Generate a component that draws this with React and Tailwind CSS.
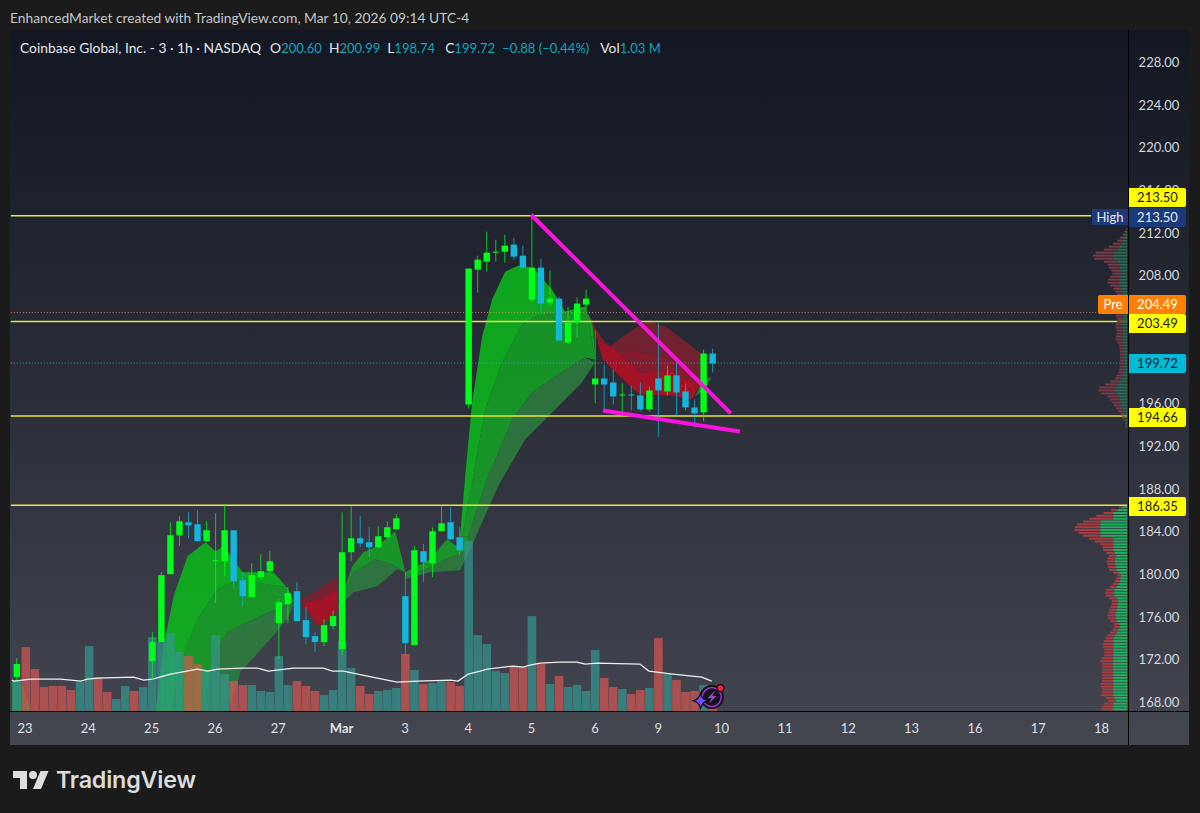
const xAt = (i) => 16 + 9.05 * i;

// [index, bodyTop, bodyBottom, wickTop, wickBottom, up]
const candles = [
  [0, 665, 678, 659, 681, 1],
  [15, 643, 662, 633, 681, 1],
  [16, 576, 643, 573, 643, 1],
  [17, 536, 575, 523, 575, 1],
  [18, 522, 536, 517, 547, 1],
  [19, 523, 526, 513, 539, 0],
  [20, 525, 542, 511, 542, 0],
  [21, 531, 542, 522, 543, 1],
  [22, 561, 562, 514, 604, 1],
  [23, 531, 562, 505, 577, 1],
  [24, 531, 582, 531, 590, 0],
  [25, 581, 597, 573, 607, 0],
  [26, 576, 598, 564, 598, 1],
  [27, 572, 578, 555, 580, 1],
  [28, 562, 572, 552, 573, 1],
  [29, 603, 624, 600, 660, 1],
  [30, 594, 605, 588, 624, 1],
  [31, 592, 622, 583, 622, 0],
  [32, 621, 638, 608, 645, 0],
  [33, 637, 643, 633, 653, 0],
  [34, 626, 643, 620, 647, 1],
  [35, 617, 627, 612, 630, 1],
  [36, 553, 650, 513, 656, 1],
  [37, 539, 553, 507, 562, 1],
  [38, 539, 544, 517, 548, 0],
  [39, 543, 548, 528, 558, 0],
  [40, 537, 548, 527, 549, 1],
  [41, 528, 538, 522, 539, 1],
  [42, 519, 530, 515, 531, 1],
  [43, 597, 644, 573, 657, 0],
  [44, 551, 646, 547, 646, 1],
  [45, 552, 563, 545, 583, 0],
  [46, 532, 564, 528, 578, 1],
  [47, 524, 532, 507, 532, 1],
  [48, 523, 540, 508, 541, 0],
  [49, 538, 551, 528, 556, 0],
  [50, 269, 405, 269, 409, 1],
  [51, 260, 270, 256, 293, 1],
  [52, 253, 262, 232, 272, 1],
  [53, 252, 253, 240, 262, 1],
  [54, 246, 252, 235, 263, 1],
  [55, 245, 257, 238, 260, 0],
  [56, 256, 268, 246, 268, 0],
  [57, 268, 300, 215, 302, 1],
  [58, 268, 304, 259, 313, 0],
  [59, 299, 303, 271, 307, 1],
  [60, 299, 341, 297, 341, 0],
  [61, 323, 343, 307, 344, 1],
  [62, 304, 323, 298, 338, 1],
  [63, 299, 305, 290, 310, 1],
  [64, 379, 385, 331, 404, 1],
  [65, 379, 385, 365, 410, 0],
  [66, 383, 397, 370, 405, 0],
  [67, 395, 396, 384, 417, 1],
  [68, 395, 396, 386, 411, 0],
  [69, 396, 410, 383, 412, 0],
  [70, 391, 410, 387, 412, 1],
  [71, 379, 391, 323, 438, 0],
  [72, 376, 392, 366, 396, 1],
  [73, 376, 393, 362, 416, 0],
  [74, 392, 408, 384, 411, 0],
  [75, 408, 414, 400, 428, 0],
  [76, 354, 413, 350, 422, 1],
  [77, 354, 364, 349, 373, 0],
];

// top of each volume bar, t = teal, r = red
const volumes = [
  [681, "t"], [648, "r"], [670, "r"], [688, "r"], [687, "r"], [687, "r"], [691, "r"], [683, "t"], [647, "t"], [678, "r"],
  [693, "r"], [700, "t"], [687, "t"], [692, "r"], [688, "t"], [638, "t"], [643, "t"], [634, "t"], [653, "t"], [657, "r"],
  [665, "r"], [672, "t"], [636, "t"], [675, "t"], [682, "r"], [686, "r"], [686, "t"], [692, "t"], [693, "t"], [657, "t"],
  [686, "t"], [682, "r"], [687, "r"], [692, "r"], [696, "t"], [691, "t"], [642, "t"], [669, "t"], [687, "r"], [695, "r"],
  [692, "t"], [691, "t"], [689, "t"], [655, "r"], [671, "t"], [685, "r"], [684, "t"], [682, "t"], [683, "r"], [687, "r"],
  [542, "t"], [636, "t"], [645, "t"], [672, "t"], [674, "t"], [668, "r"], [668, "r"], [617, "t"], [665, "r"], [685, "t"],
  [677, "r"], [688, "t"], [686, "t"], [692, "t"], [651, "t"], [679, "r"], [688, "r"], [690, "t"], [695, "r"], [691, "r"],
  [689, "t"], [639, "r"], [675, "t"], [681, "r"], [693, "r"], [692, "r"], [686, "t"], [690, "r"],
];

const volumeMa =
  "11,681 13,682 30,680 60,680 80,682 87,680 97,679 133,678 143,681 152,680 170,675 197,670 207,672 217,670 240,669 257,669 268,672 293,669 323,669 332,672 343,672 377,679 387,681 397,683 417,682 450,681 458,682 468,675 480,672 487,670 513,667 523,668 530,666 540,664 560,663 577,663 585,665 597,664 640,665 649,672 673,675 702,678 712,682";

const BRIGHT = "#0cbb1b";
const MID = "#14a424";
const DARK = "#2d7f3e";

// polygons for the cloud bands, upper edge then lower edge
const greenBands = [
  { c: BRIGHT, d: "460,537 465,477 472,403 482,337 492,300 505,272 518,266 533,268 552,290 565,312 585,307 593,325 595,360 587,310 568,313 538,316 522,325 502,363 485,410 475,467 462,537" },
  { c: MID, d: "462,537 475,467 485,410 502,363 522,325 538,316 568,313 587,310 595,360 585,358 555,377 532,393 512,420 488,477 468,537" },
  { c: DARK, d: "468,537 488,477 512,420 532,393 555,377 585,358 595,363 582,383 555,410 525,440 498,487 470,550" },
  { c: BRIGHT, d: "155,712 163,647 173,597 187,557 205,543 215,552 223,547 235,563 242,573 273,573 288,590 293,602 287,588 253,583 237,580 217,590 197,620 180,663 172,712" },
  { c: MID, d: "172,712 180,663 197,620 217,590 237,580 253,583 287,588 293,602 290,605 270,612 227,633 215,653 202,712" },
  { c: DARK, d: "202,712 215,653 227,633 270,612 290,605 293,605 287,620 270,640 240,673 228,712" },
  { c: MID, d: "337,610 352,567 363,553 377,547 395,532 405,573 392,565 375,560 353,573" },
  { c: DARK, d: "337,610 353,573 375,560 392,565 405,573 397,570 377,587 353,593" },
  { c: MID, d: "405,573 430,560 447,540 460,550 460,537 468,537 470,550 445,560 430,568 405,578" },
  { c: DARK, d: "405,578 430,568 445,560 470,550 460,571 430,573 405,580" },
  { c: DARK, d: "695,397 703,382 712,377 706,389" },
];

const redBands = [
  { d: "603,340 610,347 630,332 648,321 667,328 687,343 702,355 702,378 672,360 640,352 610,352", c: "#7a2030" },
  { d: "588,313 595,328 603,340 610,352 640,352 672,360 702,378 702,388 672,372 640,373 615,350 597,340", c: "#8d1c2e" },
  { d: "597,340 615,350 640,373 672,372 702,388 702,382 692,400 672,396 640,395 620,377 603,360", c: "#b00f24" },
  { d: "287,587 302,600 337,578 337,590 320,600 302,605", c: "#7a2030" },
  { d: "302,605 320,600 337,590 337,610 332,618 318,627", c: "#b00f24" },
];

const levels = [216, 322, 416.5, 506];

const buildProfile = (keys, step, greenShare) => {
  const rows = [];
  for (let y = keys[0][0]; y <= keys[keys.length - 1][0]; y += step) {
    let k = 0;
    while (k < keys.length - 2 && keys[k + 1][0] < y) k++;
    const [y0, w0] = keys[k];
    const [y1, w1] = keys[k + 1];
    const total = w0 + ((w1 - w0) * (y - y0)) / (y1 - y0);
    rows.push({ y, total, green: greenShare(total) });
  }
  return rows;
};

const upperProfile = buildProfile(
  [[228, 1], [235, 5], [240, 10], [245, 17], [250, 25], [253, 35], [258, 33], [262, 20], [268, 18], [272, 14], [277, 18], [282, 20], [290, 12], [297, 9], [305, 7], [312, 12], [320, 10], [325, 12], [332, 10], [338, 12], [345, 8], [352, 7], [360, 7], [370, 8], [378, 12], [384, 22], [388, 30], [392, 28], [396, 20], [402, 15], [407, 12], [412, 8], [420, 3], [428, 1]],
  3,
  (t) => t * 0.42
);

const lowerProfile = buildProfile(
  [[507, 8], [512, 22], [518, 37], [525, 52], [530, 53], [535, 45], [540, 35], [545, 25], [550, 24], [555, 18], [560, 21], [565, 20], [570, 18], [575, 10], [580, 12], [585, 15], [590, 22], [595, 22], [600, 15], [605, 16], [610, 18], [615, 20], [620, 18], [625, 12], [630, 15], [635, 20], [640, 23], [645, 25], [650, 23], [655, 23], [660, 27], [665, 25], [670, 25], [675, 25], [680, 25], [685, 27], [690, 25], [695, 26], [700, 18], [705, 25], [711, 27]],
  2.85,
  (t) => Math.min(t * 0.6, t > 40 ? 27 : 14)
);

const priceTicks = [
  ["228.00", 62], ["224.00", 105], ["220.00", 147], ["216.00", 190], ["212.00", 233], ["208.00", 275],
  ["196.00", 403], ["192.00", 446], ["188.00", 489], ["184.00", 531], ["180.00", 574], ["176.00", 617], ["172.00", 659], ["168.00", 702],
];

const priceTags = [
  { label: "213.50", y: 197.5, cls: "bg-[#ffff00] text-[#1a1a1a]" },
  { label: "213.50", y: 217, cls: "bg-[#1a3a7c] text-[#e8eaf0]" },
  { label: "204.49", y: 304.5, cls: "bg-[#ff8000] text-white" },
  { label: "203.49", y: 323.5, cls: "bg-[#ffff00] text-[#1a1a1a]" },
  { label: "199.72", y: 363.5, cls: "bg-[#00bcd9] text-[#10222a]" },
  { label: "194.66", y: 417, cls: "bg-[#ffff00] text-[#1a1a1a]" },
  { label: "186.35", y: 506.5, cls: "bg-[#ffff00] text-[#1a1a1a]" },
];

const days = ["23", "24", "25", "26", "27", "Mar", "3", "4", "5", "6", "9", "10", "11", "12", "13", "16", "17", "18"];

function ChartDrawing() {
  return (
    <svg viewBox="10 30 1118 682" className="absolute inset-0 w-full h-full">
      <polygon points="11,681 20,683 30,712 11,712" fill="#14a82a" opacity="0.6" />
      {greenBands.map((b, i) => (
        <polygon key={i} points={b.d} fill={b.c} opacity="0.85" />
      ))}
      {redBands.map((b, i) => (
        <polygon key={i} points={b.d} fill={b.c} opacity="0.9" />
      ))}
      {volumes.map(([top, kind], i) => (
        <rect key={i} x={xAt(i) - 4.3} y={top} width="8.6" height={712 - top} fill={kind === "t" ? "#349792" : "#d85752"} opacity="0.7" />
      ))}
      <polyline points={volumeMa} fill="none" stroke="#eef0f2" strokeWidth="1.3" />
      {levels.map((y, i) => (
        <line key={y} x1="10" x2={i === 0 ? 1092 : 1128} y1={y} y2={y} stroke="#e8e63c" strokeWidth="1.5" />
      ))}
      <line x1="10" x2="1098" y1="313" y2="313" stroke="#c98a5a" strokeWidth="1" strokeDasharray="1 2" />
      <line x1="10" x2="1128" y1="363.5" y2="363.5" stroke="#2aa8c0" strokeWidth="1" strokeDasharray="1 2" />
      {upperProfile.map((r) => (
        <g key={r.y}>
          <rect x={1128 - r.total} y={r.y} width={r.total - r.green} height="2" fill="#7a3a46" />
          <rect x={1128 - r.green} y={r.y} width={r.green} height="2" fill="#2a6f58" />
        </g>
      ))}
      {lowerProfile.map((r) => (
        <g key={r.y}>
          <rect x={1128 - r.total} y={r.y} width={r.total - r.green} height="2" fill="#a83c42" />
          <rect x={1128 - r.green} y={r.y} width={r.green} height="2" fill="#1fb060" />
        </g>
      ))}
      {candles.map(([i, top, bottom, high, low, up]) => {
        const x = xAt(i);
        const color = up ? "#00ff1a" : "#14b6dc";
        const doji = bottom - top <= 1;
        return (
          <g key={i}>
            <line x1={x} x2={x} y1={high} y2={low} stroke={color} strokeWidth="1" opacity="0.75" />
            <rect x={x - (doji ? 3 : 3.2)} y={top} width={doji ? 6 : 6.4} height={doji ? 1 : bottom - top} fill={color} />
          </g>
        );
      })}
      <line x1="531" y1="215" x2="731" y2="414" stroke="#fb12e0" strokeWidth="4" />
      <line x1="603" y1="411" x2="740" y2="432" stroke="#fb12e0" strokeWidth="4" />
      <circle cx="712" cy="698" r="12" fill="#0f0d14" />
      <circle cx="712" cy="698" r="9.5" fill="#16131c" stroke="#9a35c8" strokeWidth="1.6" />
      <path d="M715.5 691.5 L708 699 H712 L709.5 704.5 L716.5 697 H712.5 Z" fill="#a044e0" />
      <path d="M700.7 694.5 Q702.2 700.2 708 701.7 Q702.2 703.2 700.7 709 Q699.2 703.2 693.4 701.7 Q699.2 700.2 700.7 694.5 Z" fill="#6f4cff" stroke="#0f0d14" strokeWidth="1.2" />
      <circle cx="720.7" cy="689" r="3.5" fill="#f0243c" stroke="#0f0d14" strokeWidth="1.2" />
    </svg>
  );
}

function Legend() {
  const Value = ({ label, value, gap = "mr-[7px]" }) => (
    <span className={gap}>
      <span className="text-[#e6e8ee] text-[13.8px]">{label}</span>
      <span className="text-[#18a3bb]">{value}</span>
    </span>
  );
  return (
    <div className="absolute left-[10px] top-[10px] text-[13px] leading-[16px] whitespace-nowrap flex items-baseline">
      <span className="text-[#e6e8ee] text-[13.8px] mr-[9px]">Coinbase Global, Inc. - 3 · 1h · NASDAQ</span>
      <Value label="O" value="200.60" />
      <Value label="H" value="200.99" />
      <Value label="L" value="198.74" gap="mr-[10px]" />
      <Value label="C" value="199.72" />
      <span className="text-[#18a3bb] mr-[11px]">−0.88 (−0.44%)</span>
      <Value label="Vol" value="1.03 M" />
    </div>
  );
}

function TvLogo() {
  return (
    <svg viewBox="0 4 36 18" className="w-[36px] h-[18px] fill-[#dedede]">
      <path d="M14 22H7V11H0V4h14v18zM28 22h-8l7.5-18h8L28 22z" />
      <circle cx="20" cy="8" r="4" />
    </svg>
  );
}

export default function App() {
  return (
    <div className="w-full h-[813px] bg-[#1b1b1b] pl-[10px] pr-[11px] flex flex-col overflow-hidden" style={{ fontFamily: "Lato, sans-serif" }}>
      <div className="h-[30px] pt-[9px] text-[13.8px] leading-[18px] text-[#c4c6ca] whitespace-nowrap">
        EnhancedMarket created with TradingView.com, Mar 10, 2026 09:14 UTC-4
      </div>

      <div className="h-[715px] flex flex-col bg-linear-to-b from-[#131722] to-[#444650]">
        <div className="h-[682px] flex border-b border-black">
          <div className="relative w-[1118px]">
            <ChartDrawing />
            <Legend />
            <div className="absolute left-[1082px] top-[179px] w-[36px] h-[16px] bg-[#1a3a7c] text-[#e8eaf0] text-[13px] leading-[16px] text-center">
              High
            </div>
            <div className="absolute left-[1088px] top-[265px] w-[30px] h-[19px] bg-[#ff8000] rounded-l-[2px] text-white text-[13px] leading-[19px] text-center">
              Pre
            </div>
          </div>
          <div className="relative flex-1 border-l border-black">
            {priceTicks.map(([label, y]) => (
              <span key={label} className="absolute left-0 w-[60px] text-center text-[13px] leading-[16px] text-[#d6d8de]" style={{ top: y - 38 }}>
                {label}
              </span>
            ))}
            {priceTags.map((t) => (
              <span
                key={t.label + t.y}
                className={"absolute left-0 w-[57px] h-[19px] rounded-r-[2px] text-center text-[13px] leading-[19px] " + t.cls}
                style={{ top: t.y - 39.5 }}
              >
                {t.label}
              </span>
            ))}
          </div>
        </div>
        <div className="flex-1 flex">
          <div className="relative w-[1118px]">
            {days.map((d, i) => (
              <span
                key={d}
                className={"absolute top-[8px] w-[40px] text-center text-[13px] leading-[16px] text-[#dfe1e6] " + (d === "Mar" ? "font-bold" : "")}
                style={{ left: 63.33 * i - 5 }}
              >
                {d}
              </span>
            ))}
          </div>
          <div className="flex-1 border-l border-black" />
        </div>
      </div>

      <div className="flex items-center gap-[7px] pl-[3px] pt-[21px]">
        <TvLogo />
        <span className="text-[23.3px] leading-[28px] font-semibold text-[#dcdcdc] tracking-[-0.2px]" style={{ fontFamily: "Inter, sans-serif" }}>
          TradingView
        </span>
      </div>
    </div>
  );
}
